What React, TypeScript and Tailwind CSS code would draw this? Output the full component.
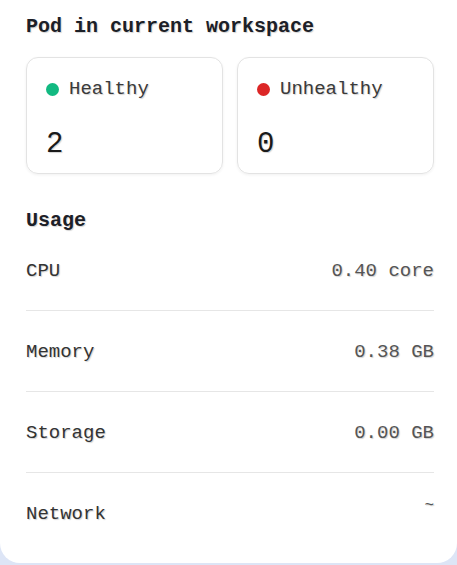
import React from "react";

const mono = { fontFamily: '"Liberation Mono", "DejaVu Sans Mono", monospace' };

const usage = [
  { label: "CPU", value: "0.40 core" },
  { label: "Memory", value: "0.38 GB" },
  { label: "Storage", value: "0.00 GB" },
  { label: "Network", value: "~" },
];

const pods = [
  { label: "Healthy", count: 2, dot: "bg-[#12b981]" },
  { label: "Unhealthy", count: 0, dot: "bg-[#dc2626]" },
];

export default function App() {
  return (
    <div
      className="h-[565px] w-[457px] bg-[#dde5f6] [text-shadow:1px_1px_1px_rgba(0,0,0,0.18)]"
      style={mono}
    >
      <div className="h-[563px] rounded-b-[20px] bg-white pl-[26px] pr-[23px] pt-[15px]">
        <h2 className="text-[20px] font-bold leading-[24px] text-[#1c2027]">
          Pod in current workspace
        </h2>

        <div className="mt-[18px] grid grid-cols-2 gap-[14px]">
          {pods.map((p) => (
            <div
              key={p.label}
              className="h-[117px] rounded-[12px] border border-[#e3e3e3] px-[19px] pt-[19px] shadow-[0_1px_3px_rgba(0,0,0,0.06)]"
            >
              <div className="flex items-center gap-[10px]">
                <span className={`h-[13px] w-[13px] rounded-full ${p.dot}`} />
                <span className="text-[19px] leading-[24px] text-[#3a3a3a]">{p.label}</span>
              </div>
              <div className="mt-[28px] text-[29px] leading-[32px] text-[#1a1a1a]">{p.count}</div>
            </div>
          ))}
        </div>

        <h3 className="mt-[35px] text-[20px] font-bold leading-[24px] text-[#1c2027]">Usage</h3>

        <div className="mt-[26px]">
          {usage.map((u, i) => (
            <div
              key={u.label}
              className={`flex justify-between ${i === 0 ? "pt-0" : "pt-[29px]"} ${
                i < usage.length - 1 ? "border-b border-[#e6e6e6] pb-[27px]" : ""
              }`}
            >
              <span className="text-[19px] leading-[24px] text-[#333]">{u.label}</span>
              {u.value === "~" ? (
                <span className="-mt-[8px] text-[16px] leading-[24px] text-[#555]">~</span>
              ) : (
                <span className="text-[19px] leading-[24px] text-[#555]">{u.value}</span>
              )}
            </div>
          ))}
        </div>
      </div>
    </div>
  );
}
